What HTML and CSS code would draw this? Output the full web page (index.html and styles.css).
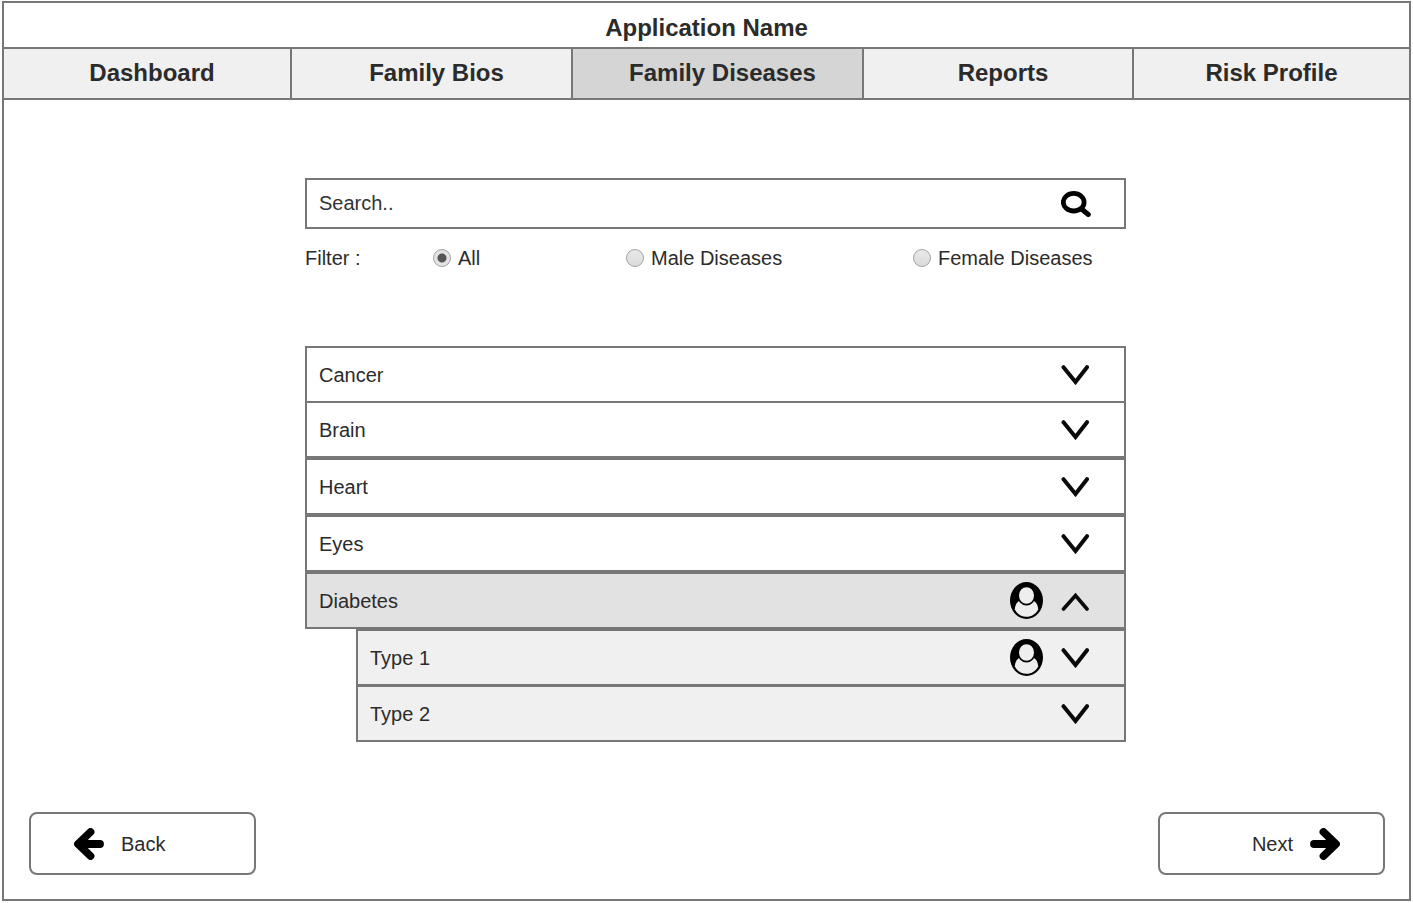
FILE: index.html
```html
<!DOCTYPE html>
<html lang="en">
<head>
<meta charset="utf-8">
<meta name="viewport" content="width=device-width, initial-scale=1">
<title>Application Name</title>
<link rel="stylesheet" href="styles.css">
</head>
<body>
<svg class="sprite" aria-hidden="true">
  <symbol id="down" viewBox="0 0 28 20"><path d="M2.500 2.200L14.500 17L26 2.200" fill="none" stroke="#0a0a0a" stroke-width="4" stroke-linecap="round"/></symbol>
  <symbol id="up" viewBox="0 0 28 20"><path d="M2.500 18L14.500 4.500L26 18" fill="none" stroke="#0a0a0a" stroke-width="3.600" stroke-linecap="round"/></symbol>
  <symbol id="person" viewBox="0 0 33 37">
    <ellipse cx="16.500" cy="18.500" rx="16.500" ry="18.500"/>
    <path d="M4.800 27.500C5 23.500 6.500 20.500 9 19H24C26.500 20.500 28 23.500 28.200 27.500C26 32 21.500 34.800 16.500 34.800S7 32 4.800 27.500Z" fill="currentColor"/>
    <ellipse cx="16.500" cy="13.500" rx="8.400" ry="9.200" fill="currentColor" stroke="#000" stroke-width="1.800"/>
  </symbol>
  <symbol id="arrow" viewBox="0 0 30 32"><path d="M3.500 16L16 4L13 16L16 28Z"/><path d="M16.500 4L4 16L16.500 28M5 16H26" fill="none" stroke="#000" stroke-width="7.800" stroke-linecap="round" stroke-linejoin="round"/></symbol>
</svg>
<div class="frame">
  <header>
    <h1 class="title">Application Name</h1>
    <nav class="tabs">
      <a class="tab" href="#dashboard">Dashboard</a>
      <a class="tab" href="#bios">Family Bios</a>
      <a class="tab tab-active" href="#diseases" aria-current="page">Family Diseases</a>
      <a class="tab" href="#reports">Reports</a>
      <a class="tab tab-last" href="#risk">Risk Profile</a>
    </nav>
  </header>
  <main class="content">
    <form class="search" role="search">
      <input class="search-input" type="text" placeholder="Search.." aria-label="Search">
      <button class="search-button" type="button" aria-label="Search">
        <svg class="search-icon" viewBox="0 0 30 26"><ellipse cx="12.700" cy="11.200" rx="10.400" ry="8.800" fill="none" stroke="#000" stroke-width="4.800"/><path d="M20.500 18L27.300 23.500" stroke="#000" stroke-width="5" stroke-linecap="round"/></svg>
      </button>
    </form>
    <div class="filter" role="radiogroup" aria-labelledby="filter-label">
      <span id="filter-label">Filter :</span>
      <label class="option"><input class="radio" type="radio" name="filter" checked>All</label>
      <label class="option"><input class="radio" type="radio" name="filter">Male Diseases</label>
      <label class="option"><input class="radio" type="radio" name="filter">Female Diseases</label>
    </div>
    <ul class="list">
      <li class="item-joined"><button class="row" type="button" aria-expanded="false"><span class="name">Cancer</span><svg class="chevron"><use href="#down"/></svg></button></li>
      <li><button class="row" type="button" aria-expanded="false"><span class="name">Brain</span><svg class="chevron"><use href="#down"/></svg></button></li>
      <li><button class="row" type="button" aria-expanded="false"><span class="name">Heart</span><svg class="chevron"><use href="#down"/></svg></button></li>
      <li><button class="row" type="button" aria-expanded="false"><span class="name">Eyes</span><svg class="chevron"><use href="#down"/></svg></button></li>
      <li>
        <button class="row row-open" type="button" aria-expanded="true"><span class="name">Diabetes</span><svg class="person"><use href="#person"/></svg><svg class="chevron"><use href="#up"/></svg></button>
        <ul class="sublist">
          <li class="subitem-joined"><button class="row row-sub" type="button" aria-expanded="false"><span class="name">Type 1</span><svg class="person"><use href="#person"/></svg><svg class="chevron"><use href="#down"/></svg></button></li>
          <li><button class="row row-sub" type="button" aria-expanded="false"><span class="name">Type 2</span><svg class="chevron"><use href="#down"/></svg></button></li>
        </ul>
      </li>
    </ul>
  </main>
  <footer class="footer">
    <button class="step" type="button"><svg class="arrow"><use href="#arrow"/></svg>Back</button>
    <button class="step step-next" type="button">Next<svg class="arrow arrow-right"><use href="#arrow"/></svg></button>
  </footer>
</div>
</body>
</html>
```

FILE: styles.css
```css
* {
  box-sizing: border-box;
}

body {
  margin: 1px 2px 2px;
  background: #fff;
  color: #2b2b2b;
  font: 20px/24px "Liberation Sans", Arial, sans-serif;
}

button,
input {
  margin: 0;
  color: inherit;
  font: inherit;
}

ul {
  margin: 0;
  padding: 0;
  list-style: none;
}

.sprite {
  display: none;
}

.frame {
  display: flex;
  flex-direction: column;
  min-height: calc(100vh - 3px);
  border: 2px solid #777;
}

.title {
  margin: 0;
  padding: 11px 0 5px;
  font-size: 24px;
  line-height: 28px;
  text-align: center;
}

.tabs {
  display: grid;
  grid-template-columns: 288fr 281fr 291fr 270fr 275fr;
  border-top: 2px solid #777;
  border-bottom: 2px solid #777;
}

.tab {
  padding: 10px 0 11px 10px;
  border-right: 2px solid #777;
  background: #f0f0f0;
  color: inherit;
  font-size: 24px;
  font-weight: bold;
  line-height: 28px;
  text-align: center;
  text-decoration: none;
}

.tab-active {
  background: #d5d5d5;
}

.tab-last {
  padding-left: 0;
  border-right: 0;
}

.content {
  width: 100%;
  max-width: 839px;
  margin: 0 auto;
  padding: 78px 0 0 18px;
}

.search {
  display: flex;
  align-items: center;
  border: 2px solid #777;
}

.search-input {
  flex: 1;
  min-width: 0;
  height: 47px;
  padding: 0 12px;
  border: 0;
  background: none;
}

.search-input::placeholder {
  color: #333;
  opacity: 1;
}

.search-button {
  padding: 0 33px 0 0;
  border: 0;
  background: none;
}

.search-icon {
  display: block;
  width: 30px;
  height: 26px;
}

.filter {
  display: grid;
  grid-template-columns: 128fr 193fr 287fr 213fr;
  align-items: center;
  margin: 17px 0 76px;
}

.option {
  display: flex;
  align-items: center;
  gap: 7px;
  white-space: nowrap;
}

.radio {
  flex: none;
  appearance: none;
  width: 18px;
  height: 18px;
  border: 1px solid #a3a3a3;
  border-radius: 50%;
  background: linear-gradient(#e9e9e9, #dadada);
}

.radio:checked {
  background: radial-gradient(circle, #555 4px, #e3e3e3 5px);
}

.row {
  display: flex;
  align-items: center;
  width: 100%;
  height: 57px;
  padding: 0 35px 0 12px;
  border: 2px solid #777;
  background: #fff;
  text-align: left;
}

.row-open {
  background: #e2e2e2;
}

.row-sub {
  background: #f0f0f0;
}

.name {
  flex: 1;
}

.item-joined {
  margin-bottom: -2px;
}

.subitem-joined {
  margin-bottom: -1px;
}

.sublist {
  margin-left: 51px;
}

.chevron {
  width: 28px;
  height: 20px;
}

.person {
  width: 33px;
  height: 37px;
  margin-right: 18px;
  color: #eee;
}

.footer {
  display: flex;
  justify-content: space-between;
  margin-top: auto;
  padding: 24px 24px 24px 25px;
}

.step {
  display: flex;
  align-items: center;
  gap: 17px;
  width: 227px;
  height: 63px;
  padding: 0 43px;
  border: 2px solid #777;
  border-radius: 8px;
  background: #fff;
}

.step-next {
  justify-content: flex-end;
}

.arrow {
  width: 30px;
  height: 32px;
}

.arrow-right {
  transform: scaleX(-1);
}
```
